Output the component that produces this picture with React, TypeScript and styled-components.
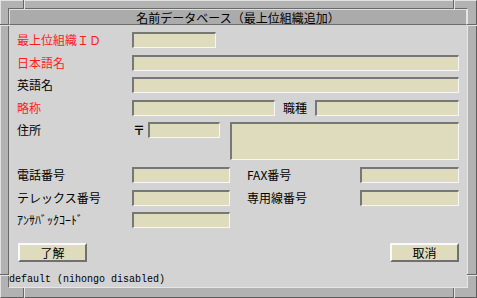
import React from "react";
import styled, { createGlobalStyle, css } from "styled-components";

const Global = createGlobalStyle`
  html, body { margin: 0; padding: 0; background: #b0b0b0; }
  body { font-family: "Noto Sans CJK JP", "Noto Sans", sans-serif; }
`;

const JP = `"Noto Sans CJK JP", "Noto Sans", sans-serif`;

const Window = styled.div`
  position: relative;
  width: 477px;
  height: 298px;
  box-sizing: border-box;
  background: #b2b2b2;
  border-top: 1px solid #e2e2e2;
  border-left: 1px solid #e2e2e2;
  border-right: 1px solid #5c5c5c;
  border-bottom: 1px solid #5c5c5c;
  padding: 7px 8px 9px 7px;
  display: flex;
`;

const Inner = styled.div`
  flex: 1;
  display: flex;
  flex-direction: column;
  border-top: 1px solid #6a6a6a;
  border-left: 1px solid #6a6a6a;
  border-right: 1px solid #e6e6e6;
  border-bottom: 1px solid #e6e6e6;
`;

const TitleBar = styled.div`
  height: 16px;
  box-sizing: border-box;
  background: #ababab;
  border-top: 1px solid #dedede;
  border-left: 1px solid #dedede;
  border-right: 1px solid #e4e4e4;
  border-bottom: 1px solid #6c6c6c;
  display: flex;
  align-items: center;
  justify-content: center;
  font-family: ${JP};
  font-size: 12px;
  line-height: 14px;
  color: #000;
  padding-top: 1px;
`;

const Content = styled.div`
  flex: 1;
  background: #d3d3d3;
  display: flex;
  flex-direction: column;
  padding: 7px 8px 0 8px;
`;

const Row = styled.div<{ $top: number }>`
  display: flex;
  align-items: flex-start;
  margin-top: ${(p) => p.$top}px;
`;

const Label = styled.span<{ $red?: boolean }>`
  width: 115px;
  flex: none;
  font-family: ${JP};
  font-size: 12px;
  line-height: 16px;
  height: 16px;
  color: ${(p) => (p.$red ? "#ff1a1a" : "#000")};
  white-space: nowrap;
`;

const SubLabel = styled.span<{ $w: number; $gap: number }>`
  width: ${(p) => p.$w}px;
  margin-left: ${(p) => p.$gap}px;
  flex: none;
  font-family: ${JP};
  font-size: 12px;
  line-height: 16px;
  color: #000;
  white-space: nowrap;
`;

const fieldLook = css`
  box-sizing: border-box;
  flex: none;
  margin: 0;
  padding: 0 2px;
  background: #dedcbd;
  border-top: 2px solid #777777;
  border-left: 2px solid #777777;
  border-right: 1px solid #f6f6f6;
  border-bottom: 1px solid #f6f6f6;
  outline: none;
  font-family: ${JP};
  font-size: 12px;
`;

const Field = styled.input<{ $w: number; $gap?: number }>`
  ${fieldLook};
  width: ${(p) => p.$w}px;
  height: 16px;
  margin-left: ${(p) => p.$gap ?? 0}px;
`;

const Area = styled.textarea<{ $w: number; $gap: number }>`
  ${fieldLook};
  width: ${(p) => p.$w}px;
  height: 38px;
  margin-left: ${(p) => p.$gap}px;
  resize: none;
`;

const Postal = styled.span`
  width: 16px;
  flex: none;
  font-family: ${JP};
  font-size: 12px;
  font-weight: 700;
  line-height: 16px;
  color: #000;
  text-indent: 1px;
`;

const ButtonRow = styled.div`
  display: flex;
  justify-content: space-between;
  margin-top: 15px;
  padding-left: 1px;
`;

const Button = styled.button`
  width: 69px;
  height: 19px;
  box-sizing: border-box;
  margin: 0;
  padding: 0;
  background: #dedcbd;
  border-top: 2px solid #fafafa;
  border-left: 2px solid #fafafa;
  border-right: 2px solid #707070;
  border-bottom: 2px solid #707070;
  font-family: ${JP};
  font-size: 12px;
  line-height: 14px;
  color: #000;
`;

const Status = styled.div`
  margin: auto -8px 0 -8px;
  height: 13px;
  font-family: "Liberation Mono", "DejaVu Sans Mono", monospace;
  font-size: 10px;
  line-height: 12px;
  color: #000;
  white-space: pre;
`;

const Tick = styled.span<{ $x: number; $y: number; $v: boolean; $len: number }>`
  position: absolute;
  left: ${(p) => p.$x}px;
  top: ${(p) => p.$y}px;
  width: ${(p) => (p.$v ? 1 : p.$len)}px;
  height: ${(p) => (p.$v ? p.$len : 1)}px;
  background: #666666;
  ${(p) =>
    p.$v
      ? css`box-shadow: 1px 0 0 #e4e4e4;`
      : css`box-shadow: 0 1px 0 #e4e4e4;`}
`;

const ticks = [
  { x: 22, y: -1, v: true, len: 9 },
  { x: 452, y: -1, v: true, len: 9 },
  { x: 22, y: 287, v: true, len: 10 },
  { x: 452, y: 287, v: true, len: 10 },
  { x: -1, y: 23, v: false, len: 9 },
  { x: -1, y: 273, v: false, len: 9 },
  { x: 466, y: 23, v: false, len: 10 },
  { x: 466, y: 273, v: false, len: 10 },
];

export default function App() {
  return (
    <>
      <Global />
      <Window>
        <Inner>
          <TitleBar>名前データベース（最上位組織追加）</TitleBar>
          <Content>
            <Row $top={0}>
              <Label $red>最上位組織ＩＤ</Label>
              <Field $w={84} readOnly />
            </Row>
            <Row $top={7}>
              <Label $red>日本語名</Label>
              <Field $w={327} readOnly />
            </Row>
            <Row $top={6}>
              <Label>英語名</Label>
              <Field $w={327} readOnly />
            </Row>
            <Row $top={7}>
              <Label $red>略称</Label>
              <Field $w={143} readOnly />
              <SubLabel $w={32} $gap={8}>職種</SubLabel>
              <Field $w={144} readOnly />
            </Row>
            <Row $top={6}>
              <Label>住所</Label>
              <Postal>〒</Postal>
              <Field $w={72} readOnly />
              <Area $w={229} $gap={10} readOnly />
            </Row>
            <Row $top={7}>
              <Label>電話番号</Label>
              <Field $w={98} readOnly />
              <SubLabel $w={113} $gap={17}>FAX番号</SubLabel>
              <Field $w={99} readOnly />
            </Row>
            <Row $top={7}>
              <Label>テレックス番号</Label>
              <Field $w={98} readOnly />
              <SubLabel $w={113} $gap={17}>専用線番号</SubLabel>
              <Field $w={99} readOnly />
            </Row>
            <Row $top={6}>
              <Label>ｱﾝｻﾊﾞｯｸｺｰﾄﾞ</Label>
              <Field $w={98} readOnly />
            </Row>
            <ButtonRow>
              <Button>了解</Button>
              <Button>取消</Button>
            </ButtonRow>
            <Status>default (nihongo disabled)</Status>
          </Content>
        </Inner>
        {ticks.map((t, i) => (
          <Tick key={i} $x={t.x} $y={t.y} $v={t.v} $len={t.len} />
        ))}
      </Window>
    </>
  );
}
